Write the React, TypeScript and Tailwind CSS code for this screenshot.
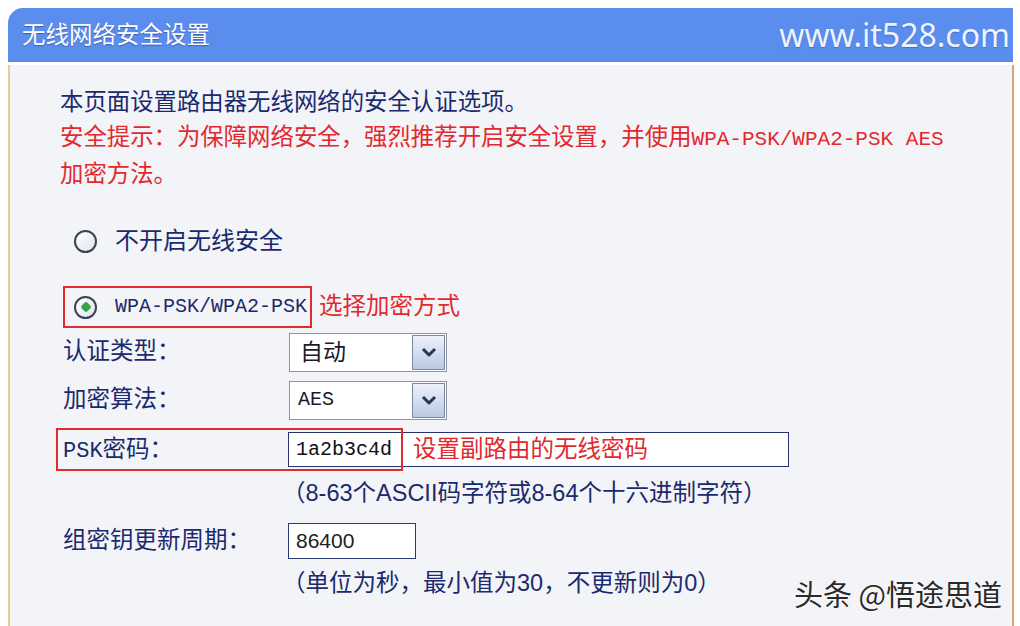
const CJK = "font-['Liberation_Sans','Noto_Sans_CJK_SC',sans-serif]"

function Radio({ checked = false }: { checked?: boolean }) {
  return (
    <span className="flex items-center justify-center w-[23px] h-[23px] rounded-full border-2 border-[#3a4256] bg-linear-to-br from-white to-[#dfe3ea]">
      {checked && <span className="w-[8px] h-[8px] rotate-45 rounded-[2px] bg-[#36a347]" />}
    </span>
  )
}

function Chevron() {
  return (
    <svg width="16" height="10" viewBox="0 0 16 10">
      <polyline points="2,2 8,8 14,2" fill="none" stroke="#2a3656" strokeWidth="3" strokeLinejoin="round" />
    </svg>
  )
}

function Select({ value, mono = false }: { value: string; mono?: boolean }) {
  return (
    <div className="flex w-[158px] h-[39px] border border-[#8d95a5] bg-white">
      <span
        className={
          mono
            ? "flex-1 flex items-center pl-[8px] text-[20px] text-[#1a1a2a] font-['Liberation_Mono',monospace]"
            : 'flex-1 flex items-center pl-[10px] text-[23px] text-[#1a1a2a]'
        }
      >
        {value}
      </span>
      <span className="m-[1px] w-[33px] flex items-center justify-center border border-[#7b879c] bg-linear-to-b from-[#eef2fa] to-[#b9cae4]">
        <Chevron />
      </span>
    </div>
  )
}

export default function App() {
  return (
    <div className={`relative w-[1020px] h-[626px] overflow-hidden bg-white pt-2 pl-2 ${CJK}`}>
      {/* header */}
      <div className="flex items-center justify-between w-[1005px] h-[54px] rounded-tl-[15px] bg-[#5b8def] pl-[14px] pr-[3px]">
        <span className="text-[23.5px] text-white pt-[2px] [text-shadow:0_1px_1px_rgba(20,40,100,0.45)]">
          无线网络安全设置
        </span>
        <span className="text-[32px] leading-none text-[#eef4ff] font-['Noto_Sans',sans-serif] [text-shadow:0_1px_1px_rgba(20,40,100,0.3)]">
          www.it528.com
        </span>
      </div>

      {/* panel */}
      <div className="mt-[3px] w-[1006px] h-[561px] bg-[#f3f4f7] border-l-2 border-l-[#f3c795] border-r-2 border-r-[#d6a574] pt-[20px] pl-[50px]">
        <div className="text-[23.4px] leading-[35px] whitespace-nowrap">
          <div className="text-[#1b2a6e]">本页面设置路由器无线网络的安全认证选项。</div>
          <div className="text-[#e1292f]">
            安全提示：为保障网络安全，强烈推荐开启安全设置，并使用
            <span className="text-[21px] font-['Liberation_Mono',monospace]">WPA-PSK/WPA2-PSK AES</span>
            <br />
            加密方法。
          </div>
        </div>

        {/* radio 1 */}
        <div className="mt-[29px] h-[40px] flex items-center pl-[14px] text-[24px] text-[#1b2a6e]">
          <Radio />
          <span className="ml-[18px]">不开启无线安全</span>
        </div>

        {/* radio 2 */}
        <div className="mt-[25px] flex items-center">
          <div className="ml-[3px] h-[42px] flex items-center border-2 border-[#e02a30] pl-[9px] pr-[3px]">
            <Radio checked />
            <span className="ml-[18px] text-[20px] text-[#1b2a6e] font-['Liberation_Mono',monospace]">WPA-PSK/WPA2-PSK</span>
          </div>
          <span className="ml-[7px] text-[23.5px] text-[#e1292f]">选择加密方式</span>
        </div>

        {/* auth type */}
        <div className="mt-[3px] h-[42px] flex items-center text-[23.5px] text-[#1b2a6e]">
          <span className="ml-[3px] w-[226px]">认证类型：</span>
          <Select value="自动" />
        </div>

        {/* encryption */}
        <div className="mt-[6px] h-[42px] flex items-center text-[23.5px] text-[#1b2a6e]">
          <span className="ml-[3px] w-[226px]">加密算法：</span>
          <Select value="AES" mono />
        </div>

        {/* psk */}
        <div className="relative mt-[7px] h-[43px] flex items-center text-[23.5px] text-[#1b2a6e]">
          <span className="ml-[3px] w-[225px]">
            <span className="text-[22px] font-['Liberation_Mono',monospace]">PSK</span>密码：
          </span>
          <div className="w-[501px] h-[35px] flex items-center border-[1.5px] border-[#27336e] bg-white pl-[7px]">
            <span className="text-[20px] text-[#111] font-['Liberation_Mono',monospace]">1a2b3c4d</span>
            <span className="ml-[21px] text-[23.5px] text-[#e1292f]">设置副路由的无线密码</span>
          </div>
          <div className="pointer-events-none absolute left-[-4px] top-0 w-[347px] h-[43px] border-2 border-[#e02a30]" />
        </div>

        <div className="mt-[8px] h-[30px] flex items-center ml-[222px] text-[23.5px] text-[#1b2a6e] whitespace-nowrap">
          （8-63个ASCII码字符或8-64个十六进制字符）
        </div>

        {/* group key */}
        <div className="mt-[12px] h-[40px] flex items-center text-[23.5px] text-[#1b2a6e]">
          <span className="ml-[3px] w-[225px]">组密钥更新周期：</span>
          <div className="w-[128px] h-[36px] flex items-center border-[1.5px] border-[#2c3a73] bg-white pl-[7px]">
            <span className="text-[21px] text-[#222]">86400</span>
          </div>
        </div>

        <div className="mt-[8px] h-[30px] flex items-center ml-[222px] text-[23.5px] text-[#1b2a6e] whitespace-nowrap">
          （单位为秒，最小值为30，不更新则为0）
        </div>
      </div>

      {/* watermark */}
      <div className="absolute right-[18px] top-[579px] text-[29px] leading-none text-[#2a2a2a] font-['Noto_Sans_CJK_SC',sans-serif] [text-shadow:0_0_2px_#fff,0_0_2px_#fff]">
        头条 @悟途思道
      </div>
    </div>
  )
}
